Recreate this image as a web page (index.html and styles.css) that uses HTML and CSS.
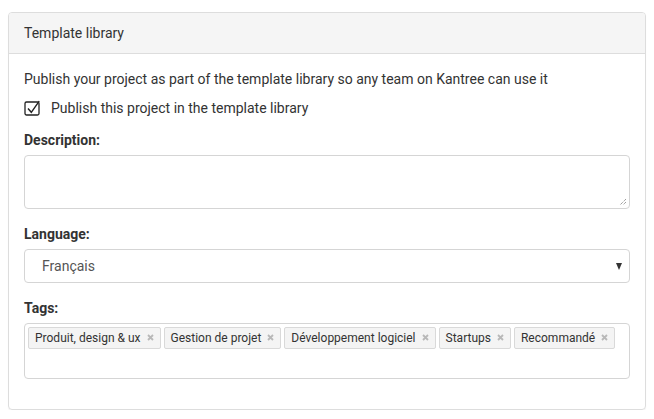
FILE: index.html
```html
<!DOCTYPE html>
<html>
<head>
<meta charset="utf-8">
<link rel="stylesheet" href="styles.css">
</head>
<body>
<div class="panel">
  <div class="panel-heading">Template library</div>
  <div class="panel-body">
    <p class="intro">Publish your project as part of the template library so any team on Kantree can use it</p>
    <label class="check">
      <span class="box"><svg width="17" height="16" viewBox="0 0 17 16"><rect x="1" y="2" width="14" height="13" rx="1.5" fill="none" stroke="#222" stroke-width="1.3"/><path d="M4 8.5 L7.3 12.3 L15.2 1.2" fill="none" stroke="#222" stroke-width="1.4"/></svg></span>
      <span>Publish this project in the template library</span>
    </label>
    <div class="field">
      <div class="label">Description:</div>
      <div class="textarea"><svg class="grip" width="9" height="9" viewBox="0 0 9 9"><path d="M8 2 L2 8 M8 5 L5 8" stroke="#777" stroke-width="1" stroke-dasharray="1 1"/></svg></div>
    </div>
    <div class="field">
      <div class="label">Language:</div>
      <div class="select"><span>Français</span><span class="caret"></span></div>
    </div>
    <div class="field">
      <div class="label">Tags:</div>
      <div class="tags">
        <span class="tag">Produit, design &amp; ux<svg class="x" width="7" height="7" viewBox="0 0 7 7"><path d="M1 1 L6 6 M6 1 L1 6" stroke="#b8b8b8" stroke-width="1.8"/></svg></span>
        <span class="tag">Gestion de projet<svg class="x" width="7" height="7" viewBox="0 0 7 7"><path d="M1 1 L6 6 M6 1 L1 6" stroke="#b8b8b8" stroke-width="1.8"/></svg></span>
        <span class="tag">Développement logiciel<svg class="x" width="7" height="7" viewBox="0 0 7 7"><path d="M1 1 L6 6 M6 1 L1 6" stroke="#b8b8b8" stroke-width="1.8"/></svg></span>
        <span class="tag">Startups<svg class="x" width="7" height="7" viewBox="0 0 7 7"><path d="M1 1 L6 6 M6 1 L1 6" stroke="#b8b8b8" stroke-width="1.8"/></svg></span>
        <span class="tag">Recommandé<svg class="x" width="7" height="7" viewBox="0 0 7 7"><path d="M1 1 L6 6 M6 1 L1 6" stroke="#b8b8b8" stroke-width="1.8"/></svg></span>
      </div>
    </div>
  </div>
</div>
</body>
</html>
```
FILE: styles.css
```css
html, body { margin: 0; padding: 0; background: #fff; }
body {
  font-family: Roboto, "Liberation Sans", sans-serif;
  font-size: 14px;
  color: #333;
  padding: 12px 8px 0 8px;
}
.panel {
  width: 636px;
  border: 1px solid #dddddd;
  border-radius: 4px;
  box-shadow: 0 1px 1px rgba(0,0,0,0.05);
}
.panel-heading {
  background: #f5f5f5;
  border-bottom: 1px solid #dddddd;
  border-radius: 3px 3px 0 0;
  height: 40px;
  line-height: 40px;
  padding: 0 15px;
  color: #333;
}
.panel-body {
  padding: 15px 15px 30px 15px;
}
.intro {
  margin: 0;
  line-height: 20px;
}
.check {
  display: flex;
  align-items: center;
  gap: 10px;
  margin-top: 9px;
  height: 20px;
}
.box { display: flex; width: 17px; height: 16px; }
.field { margin-top: 12px; }
.field + .field { margin-top: 15px; }
.label {
  font-weight: bold;
  line-height: 20px;
  margin-bottom: 5px;
}
.textarea {
  position: relative;
  height: 52px;
  border: 1px solid #d5d5d5;
  border-radius: 4px;
}
.grip { position: absolute; right: 2px; bottom: 2px; }
.select {
  height: 32px;
  border: 1px solid #d5d5d5;
  border-radius: 4px;
  display: flex;
  align-items: center;
  justify-content: space-between;
  padding: 0 5px 0 17px;
  color: #555;
}
.caret {
  width: 0; height: 0;
  border-left: 3.5px solid transparent;
  border-right: 3.5px solid transparent;
  border-top: 7px solid #333;
  margin-right: 2px;
}
.tags {
  height: 56px;
  box-sizing: border-box;
  border: 1px solid #d5d5d5;
  border-radius: 4px;
  padding: 3px;
  display: flex;
  flex-wrap: wrap;
  align-content: flex-start;
  gap: 3px;
}
.tag {
  display: inline-flex;
  align-items: center;
  height: 20px;
  padding: 0 6px;
  background: #f4f4f4;
  border: 1px solid #d9d9d9;
  border-radius: 2px;
  font-size: 12px;
  color: #333;
}
.x {
  margin-left: 6px;
  margin-top: -1px;
}
```
